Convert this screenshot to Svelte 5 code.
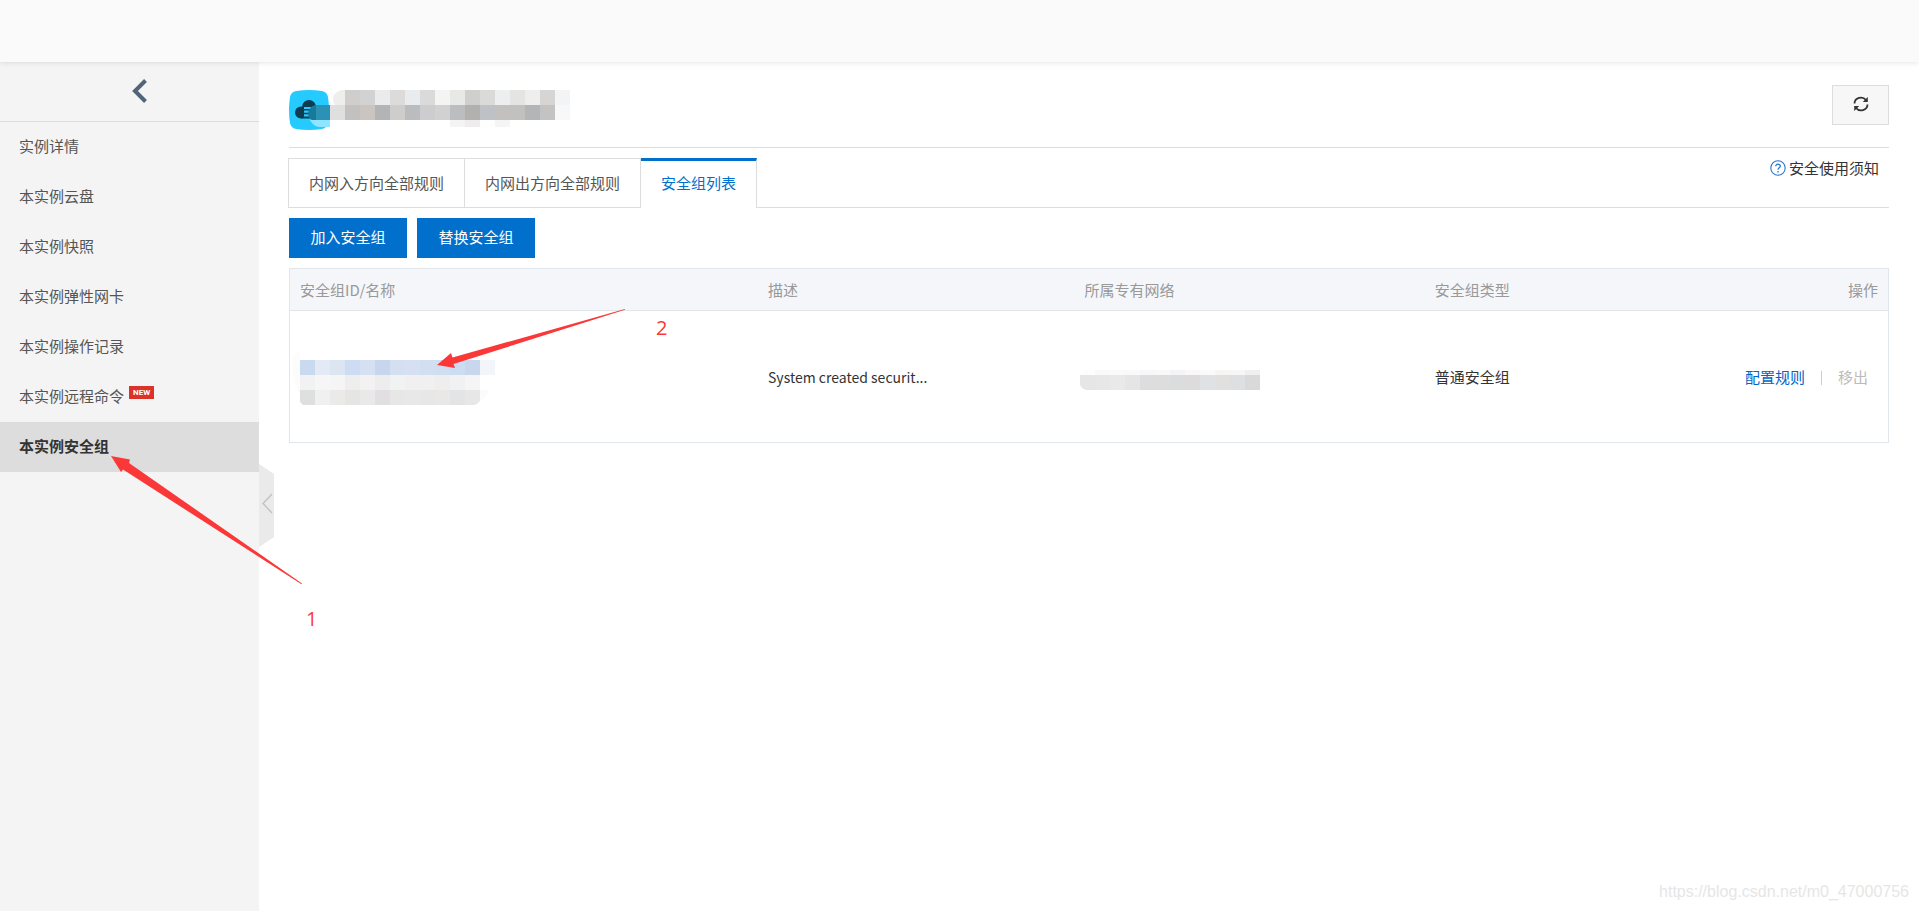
<script>
  const menu = [
    { label: '实例详情' },
    { label: '本实例云盘' },
    { label: '本实例快照' },
    { label: '本实例弹性网卡' },
    { label: '本实例操作记录' },
    { label: '本实例远程命令', isNew: true },
    { label: '本实例安全组', active: true }
  ];
  const tabs = ['内网入方向全部规则', '内网出方向全部规则', '安全组列表'];
  let activeTab = $state(2);

  // Mosaic rows: origin, cell size and the colour of each cell.
  const titleMosaic = [
    { x: 15, y: 0, w: 15, h: 15, cells: ['#d0cecd', '#d2d2d2', '#e9ebed', '#dddbda', '#e8ecee', '#dadada', '#f4f4f2', '#e8e8e6', '#cfcfcd', '#dadad8', '#eceef0', '#e4e4e2', '#eeeeee', '#d6d5d3', '#f3f4f5'] },
    { x: 0, y: 15, w: 15, h: 15, cells: ['#dfdfdf', '#c2c1c0', '#cbc5c2', '#b2b4b6', '#cfcdcb', '#babcbe', '#cdccce', '#d1d1d1', '#bbbdbf', '#b3b1ad', '#bec2c6', '#c2c1c0', '#c1c1bf', '#b4b5b7', '#c3c3c3', '#f8f8f8'] },
    { x: 120, y: 30, w: 15, h: 7, cells: ['#f4f4f4', '#eeeeee', '#fefefe', '#f5f5f5'] }
  ];
  const idMosaic = [
    { x: 0, y: 11, w: 15, h: 15, cells: ['#c9daf0', '#e3eaf6', '#dce6f2', '#cddcf2', '#d5e1f2', '#c7d6ed', '#d4e0f1', '#d6e0f2', '#d2dff0', '#cfdff1', '#ccdcf2', '#c8d7ed', '#f2f6fb'] },
    { x: 0, y: 26, w: 15, h: 15, cells: ['#f2f2f2', '#f6f6f6', '#f5f5f5', '#eeeeee', '#f2f2f2', '#ededed', '#f1f3f2', '#f0f0f0', '#f0f0f0', '#eeeeee', '#f1f1f1', '#f5f5f6'] },
    { x: 0, y: 41, w: 15, h: 15, cells: ['#dee0df', '#f0f0f0', '#ebeae8', '#e5e5e3', '#e9e9e9', '#e1dfe2', '#e7e7e5', '#e8e8e8', '#e7e7e7', '#e9e8e6', '#e2e4e6', '#e7e7e7'] }
  ];
  const vpcMosaic = [
    { x: 0, y: 6, w: 15, h: 5, cells: ['#fdfdfd', '#f9f9f9', '#fafafa', '#f9f9f9', '#f7f7f7', '#f8f8f8', '#f4f4f4', '#f8f8f8', '#fafafa', '#f5f5f5', '#f6f6f6', '#efefef'] },
    { x: 0, y: 11, w: 15, h: 15, cells: ['#e7e6e5', '#e7e7e7', '#e9e9e9', '#e5e5e5', '#dddcdf', '#dddddb', '#dadcde', '#dedbdd', '#e0e1e3', '#e1e0de', '#dedfe1', '#d9d9d9'] }
  ];
</script>

{#snippet mosaic(rows)}
  {#each rows as row}
    {#each row.cells as fill, i}
      <rect x={row.x + i * row.w} y={row.y} width={row.w} height={row.h} {fill} />
    {/each}
  {/each}
{/snippet}

<div class="page">
  <header class="topbar"></header>
  <div class="body">
    <aside class="sidebar">
      <button class="back" aria-label="返回">
        <svg width="16" height="24" viewBox="0 0 16 24"><path d="M13.5 1.5 3 12l10.5 10.5" fill="none" stroke="#546478" stroke-width="4" /></svg>
      </button>
      <nav>
        {#each menu as item}
          <a href="#menu" class:active={item.active}>
            {item.label}{#if item.isNew}<span class="new">NEW</span>{/if}
          </a>
        {/each}
      </nav>
      <button class="handle" aria-label="收起">
        <svg width="15" height="83" viewBox="0 0 15 83">
          <path d="M0 0 15 10V73L0 83z" fill="#eaeaea" />
          <path d="M13 30 4 39.500 13 49" fill="none" stroke="#c0c0c0" stroke-width="1.300" />
        </svg>
      </button>
    </aside>

    <main>
      <div class="title">
        <svg class="brand" width="281" height="40" viewBox="0 0 281 40">
          <path d="M7 1Q20-1 33 1Q38 2 39 7Q41 20 39 33Q38 38 33 39Q20 41 7 39Q2 38 1 33Q-1 20 1 7Q2 2 7 1z" fill="#25cbff" />
          <g fill="#0e3c50"><circle cx="20" cy="17" r="7" /><circle cx="12" cy="22.500" r="6" /><circle cx="28" cy="22.500" r="6" /><rect x="12" y="18" width="16" height="10.500" /></g>
          <path d="M15 18h7M15 21.700h6M15 25.400h7" stroke="#25cbff" stroke-width="2.200" />
          <path d="M41 15H27Q20 17 19 24Q20 28 23 30H41z" fill="#2b92b5" />
          <path d="M27 15v15h-4q-4-3-4-7q2-7 8-8z" fill="#187a9b" />
          <path d="M21 30H41V37H30Q24 36 21 30z" fill="#8fe4ff" />
          <path d="M56 0H52Q44 3 44 9Q44 13 46 15H56z" fill="#eeeeed" />
          <g transform="translate(41 0)">{@render mosaic(titleMosaic)}</g>
        </svg>
        <button class="refresh" aria-label="刷新">
          <svg width="16" height="16" viewBox="0 0 16 16"><g fill="none" stroke="#333" stroke-width="1.800"><path d="M1.500 7.500A6.400 6 0 0 1 13 4" /><path d="M14.500 8.500A6.400 6 0 0 1 3 12" /></g><path d="M14.800 1v5H9.800zM1.200 15v-5h5z" fill="#333" /></svg>
        </button>
      </div>

      <div class="tabs">
        {#each tabs as tab, i}
          <button class:active={activeTab === i} onclick={() => (activeTab = i)}>{tab}</button>
        {/each}
        <a class="help" href="#help">
          <svg width="16" height="16" viewBox="0 0 16 16"><circle cx="8" cy="8" r="7.200" fill="none" stroke="#2a78d0" stroke-width="1.100" /><path d="M5.700 6.300C5.700 3.400 10.400 3.500 10.300 6.200C10.200 7.800 8 7.800 8 9.800M8 11v1.500" fill="none" stroke="#2a78d0" stroke-width="1.300" /></svg>
          安全使用须知
        </a>
      </div>

      <div class="actions">
        <button>加入安全组</button>
        <button>替换安全组</button>
      </div>

      <table>
        <thead>
          <tr><th class="c1">安全组ID/名称</th><th class="c2">描述</th><th class="c3">所属专有网络</th><th class="c4">安全组类型</th><th class="ops">操作</th></tr>
        </thead>
        <tbody>
          <tr>
            <td>
              <svg class="ids" width="196" height="56" viewBox="0 0 196 56">
                <path d="M0 3Q-8 4-8 16Q-6 38 0 46z" fill="#fcfcfc" />
                {@render mosaic(idMosaic)}
                <path d="M180 41h8q0 8-8 11z" fill="#fafcfb" />
                <path d="M0 53v3h3zM174 56q4-1 6-4v4z" fill="#fff" />
              </svg>
            </td>
            <td class="desc">System created securit...</td>
            <td>
              <svg class="vpc" width="180" height="26" viewBox="0 0 180 26">
                {@render mosaic(vpcMosaic)}
                <path d="M0 6h7Q2 7 0 11zM0 21q2 4 6 5H0z" fill="#fff" />
              </svg>
            </td>
            <td>普通安全组</td>
            <td class="ops row-ops"><a href="#rules">配置规则</a><span class="sep"></span><span class="disabled">移出</span></td>
          </tr>
        </tbody>
      </table>
    </main>
  </div>

  <svg class="notes" width="700" height="640" viewBox="0 0 700 640">
    <g fill="#fb3838">
      <path d="M111 456 130 459.500 129 463 302 583.500 301.500 584.300 123 469.500 121 472z" />
      <path d="M437 365 451 353 452.500 357.500 625 309 625 309.800 453.500 364 455 368z" />
    </g>
    <g class="num"><text x="306" y="626">1</text><text x="656" y="335">2</text></g>
  </svg>
  <div class="watermark">https://blog.csdn.net/m0_47000756</div>
</div>

<style>
  :global(body) { margin: 0; background: #fff; }
  .page {
    position: relative;
    display: flex;
    flex-direction: column;
    min-height: 100vh;
    font: 15px/20px "Noto Sans CJK SC", sans-serif;
    color: #333;
  }
  a { color: inherit; text-decoration: none; }
  button { font: inherit; color: inherit; border: 0; padding: 0; background: none; cursor: pointer; }
  svg { display: block; }
  .topbar { position: relative; height: 62px; background: #fafafa; box-shadow: 0 1px 5px rgba(0, 0, 0, 0.1); z-index: 1; }
  .body { flex: 1; display: flex; }
  .sidebar { position: relative; width: 259px; flex: none; background: #f4f4f4; color: #555; }
  .back { display: flex; align-items: center; justify-content: center; width: 100%; height: 60px; padding: 0 0 2px 20px; border-bottom: 1px solid #dcdcdc; box-sizing: border-box; }
  nav a { display: flex; align-items: center; height: 50px; padding: 0 0 2px 19px; box-sizing: border-box; }
  nav a.active { background: #ddd; color: #333; font-weight: bold; }
  .new { margin: 0 0 8px 5px; padding: 0 4px; background: #dc3227; color: #fff; font: bold 8px/13px Roboto, sans-serif; }
  .handle { position: absolute; left: 100%; top: 402px; }
  main { flex: 1; min-width: 0; padding: 23px 30px 0; }
  .title { display: flex; align-items: flex-start; justify-content: space-between; height: 62px; border-bottom: 1px solid #ddd; }
  .brand { margin-top: 5px; }
  .refresh { display: flex; align-items: center; justify-content: center; width: 57px; height: 40px; padding-bottom: 2px; box-sizing: border-box; background: #f7f7f7; border: 1px solid #ddd; }
  .tabs { display: flex; margin: 10px 0 0 -1px; height: 50px; box-shadow: inset 0 -1px #ddd; }
  .tabs button { padding: 0 20px 1px; border: 1px solid #ddd; border-right: 0; color: #555; }
  .tabs button:nth-child(2) { border-right: 1px solid #ddd; }
  .tabs button.active { padding: 0 20px 4px; border: 0; border-right: 1px solid #ddd; border-top: 3px solid #0070cc; background: #fff; color: #0070cc; }
  .help { display: flex; align-items: center; gap: 3px; height: 20px; margin-left: auto; padding-right: 10px; }
  .actions { display: flex; gap: 10px; margin: 10px 0; }
  .actions button { min-width: 118px; height: 40px; padding: 0 20px 2px; background: #0070cc; color: #fff; }
  table { width: 100%; table-layout: fixed; border-collapse: collapse; border: 1px solid #e1e6eb; }
  th { height: 42px; padding: 0 10px; background: #f4f6fa; color: #999; font-weight: normal; text-align: left; border-bottom: 1px solid #e1e6eb; }
  td { height: 132px; padding: 0 10px; }
  .c1 { width: 29.3%; }
  .c2 { width: 19.8%; }
  .c3 { width: 21.9%; }
  th.ops { text-align: right; }
  th, td { box-sizing: border-box; }
  .desc { font-size: 14px; }
  .ids { overflow: visible; }
  .vpc { margin-left: -5px; }
  .row-ops { text-align: right; padding-right: 20px; color: #bbb; }
  .row-ops a { color: #0064c8; }
  .sep { display: inline-block; width: 1px; height: 14px; margin: 0 16px; background: #ccc; vertical-align: middle; }
  .notes { position: absolute; left: 0; top: 0; pointer-events: none; z-index: 2; }
  .num { fill: #fb3838; font: 20px "Open Sans", sans-serif; }
  .watermark { position: absolute; right: 10px; bottom: 9px; color: #e6e6e6; font: 16px/20px "Liberation Sans", sans-serif; }
</style>
